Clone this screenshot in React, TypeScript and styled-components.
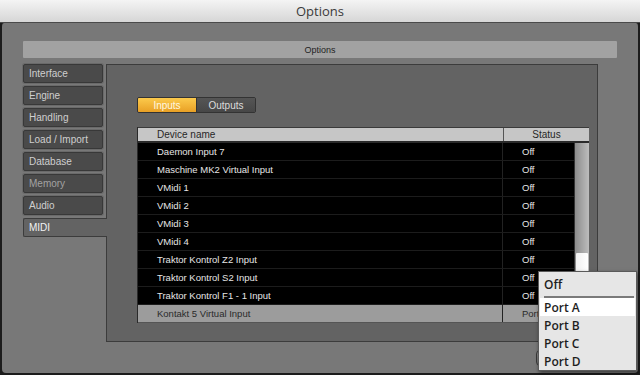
import React from "react";
import styled, { createGlobalStyle, css } from "styled-components";

const GlobalStyle = createGlobalStyle`
  html, body {
    margin: 0;
    padding: 0;
    background: #1c1c1c;
  }
  * {
    box-sizing: border-box;
  }
`;

const UI_FONT = `"Liberation Sans", Arial, sans-serif`;

// Janela
const Window = styled.div`
  position: relative;
  width: 640px;
  height: 375px;
  display: flex;
  flex-direction: column;
  background: #1c1c1c;
  font-family: ${UI_FONT};
  overflow: hidden;
`;

const TitleBar = styled.div`
  height: 23px;
  flex: none;
  display: flex;
  align-items: center;
  justify-content: center;
  background: linear-gradient(#f4f4f4, #d6d6d6);
  border-bottom: 1px solid #4a4a4a;
  color: #3a3a3a;
  font-family: "Open Sans", ${UI_FONT};
  font-size: 13px;
  padding-bottom: 1px;
`;

const Frame = styled.div`
  flex: 1;
  display: flex;
  flex-direction: column;
  background: #787878;
  border: 2px solid #1c1c1c;
  border-top: none;
  border-radius: 4px 4px 6px 6px;
  padding: 18px 21px 0 21px;
`;

const HeaderBar = styled.div`
  height: 17px;
  display: flex;
  align-items: center;
  justify-content: center;
  background: #a2a2a2;
  color: #222;
  font-size: 9px;
  border-radius: 1px;
  margin-bottom: 6px;
`;

const Body = styled.div`
  display: flex;
  height: 278px;
  padding-right: 19px;
`;

// Abas da esquerda
const Sidebar = styled.div`
  width: 83px;
  flex: none;
  display: flex;
  flex-direction: column;
  gap: 3px;
`;

const Tab = styled.div<{ $active?: boolean; $dim?: boolean }>`
  height: 19px;
  width: 80px;
  display: flex;
  align-items: center;
  padding-left: 5px;
  font-size: 10px;
  color: ${(p) => (p.$dim ? "#a2a2a2" : "#cfcfcf")};
  background: #4a4a4a;
  border: 1px solid #383838;
  border-radius: 2px;
  box-shadow: 0 0 0 1px #6a6a6a;
  ${(p) =>
    p.$active &&
    css`
      position: relative;
      z-index: 1;
      width: 84px;
      background: #636363;
      color: #f2f2f2;
      border: 1px solid #3c3c3c;
      border-right: none;
      border-radius: 2px 0 0 2px;
      box-shadow: none;
    `}
`;

const Panel = styled.div`
  flex: 1;
  display: flex;
  flex-direction: column;
  background: #636363;
  border: 1px solid #3c3c3c;
  padding: 32px 8px 0 30px;
`;

// Botões Inputs / Outputs
const Segmented = styled.div`
  display: flex;
  height: 16px;
  width: 119px;
  border: 1px solid #333;
  border-radius: 2px;
  overflow: hidden;
`;

const SegButton = styled.div<{ $on?: boolean }>`
  flex: 1;
  display: flex;
  align-items: center;
  justify-content: center;
  font-size: 10px;
  color: ${(p) => (p.$on ? "#fff8e0" : "#dcdcdc")};
  background: ${(p) =>
    p.$on ? "linear-gradient(#fcca4c, #e9a025)" : "linear-gradient(#555, #474747)"};
  & + & {
    border-left: 1px solid #333;
  }
`;

// Tabela
const Table = styled.div`
  margin-top: 14px;
  width: 452px;
  display: flex;
  flex-direction: column;
  border-left: 1px solid #2a2a2a;
`;

const HeadRow = styled.div`
  height: 16px;
  display: grid;
  grid-template-columns: 365px 1fr;
  background: #c6c6c6;
  border-top: 1px solid #3a3a3a;
  border-bottom: 2px solid #2a2a2a;
  color: #262626;
  font-size: 10px;
`;

const HeadCell = styled.div<{ $center?: boolean }>`
  display: flex;
  align-items: center;
  justify-content: ${(p) => (p.$center ? "center" : "flex-start")};
  padding-left: ${(p) => (p.$center ? "0" : "19px")};
  & + & {
    border-left: 1px solid #555;
  }
`;

const ListBody = styled.div`
  display: flex;
`;

const Rows = styled.div`
  flex: 1;
  display: flex;
  flex-direction: column;
`;

const Row = styled.div<{ $selected?: boolean }>`
  height: 18px;
  display: grid;
  grid-template-columns: 364px 1fr;
  background: ${(p) => (p.$selected ? "#9c9c9c" : "#000")};
  color: ${(p) => (p.$selected ? "#2a2a2a" : "#e6e6e6")};
  border-bottom: 1px solid ${(p) => (p.$selected ? "#555" : "#1c1c1c")};
  font-size: 9.5px;
`;

const Cell = styled.div`
  display: flex;
  align-items: center;
  padding-left: 19px;
  white-space: nowrap;
  overflow: hidden;
  & + & {
    border-left: 1px solid #222;
  }
`;

const Scrollbar = styled.div`
  width: 15px;
  flex: none;
  display: flex;
  flex-direction: column;
  background: linear-gradient(90deg, #8c8c8c, #bdbdbd);
  border-left: 1px solid #333;
`;

const Thumb = styled.div`
  height: 50px;
  margin: 0 1px;
  background: linear-gradient(90deg, #f0f0f0, #ffffff);
  border-radius: 1px;
`;

// Rodapé
const Footer = styled.div`
  display: flex;
  justify-content: flex-end;
  padding: 8px 11px 0 0;
`;

const FooterButton = styled.div`
  width: 70px;
  height: 16px;
  border: 1px solid #3a3a3a;
  border-radius: 4px;
  background: linear-gradient(#8a8a8a, #6c6c6c);
`;

// Menu suspenso
const Popup = styled.div`
  position: absolute;
  left: 538px;
  top: 271px;
  width: 99px;
  height: 100px;
  background: #e6e6e6;
  border: 1px solid #5a5a5a;
  box-shadow: 1px 2px 4px rgba(0, 0, 0, 0.5);
  padding: 3px 1px 0 1px;
  font-family: "Open Sans", ${UI_FONT};
`;

const MenuItem = styled.div<{ $hot?: boolean }>`
  height: 18px;
  display: flex;
  align-items: center;
  padding-left: 4px;
  font-size: 12px;
  font-weight: 600;
  color: #1e1e1e;
  background: ${(p) => (p.$hot ? "#ffffff" : "transparent")};
`;

const MenuSep = styled.div`
  height: 2px;
  margin: 3px 1px 0 4px;
  background: #7a7a7a;
`;

const tabs = ["Interface", "Engine", "Handling", "Load / Import", "Database", "Memory", "Audio", "MIDI"];

const devices = [
  { name: "Daemon Input 7", status: "Off" },
  { name: "Maschine MK2 Virtual Input", status: "Off" },
  { name: "VMidi 1", status: "Off" },
  { name: "VMidi 2", status: "Off" },
  { name: "VMidi 3", status: "Off" },
  { name: "VMidi 4", status: "Off" },
  { name: "Traktor Kontrol Z2 Input", status: "Off" },
  { name: "Traktor Kontrol S2 Input", status: "Off" },
  { name: "Traktor Kontrol F1 - 1 Input", status: "Off" },
  { name: "Kontakt 5 Virtual Input", status: "Port A", selected: true },
];

export default function App() {
  const thumbTop = 110;
  return (
    <Window>
      <GlobalStyle />
      <TitleBar>Options</TitleBar>
      <Frame>
        <HeaderBar>Options</HeaderBar>
        <Body>
          <Sidebar>
            {tabs.map((t) => (
              <Tab key={t} $active={t === "MIDI"} $dim={t === "Memory"}>
                {t}
              </Tab>
            ))}
          </Sidebar>
          <Panel>
            <Segmented>
              <SegButton $on>Inputs</SegButton>
              <SegButton>Outputs</SegButton>
            </Segmented>
            <Table>
              <HeadRow>
                <HeadCell>Device name</HeadCell>
                <HeadCell $center>Status</HeadCell>
              </HeadRow>
              <ListBody>
                <Rows>
                  {devices.map((d) => (
                    <Row key={d.name} $selected={d.selected}>
                      <Cell>{d.name}</Cell>
                      <Cell>{d.status}</Cell>
                    </Row>
                  ))}
                </Rows>
                <Scrollbar>
                  <Thumb style={{ marginTop: thumbTop }} />
                </Scrollbar>
              </ListBody>
            </Table>
          </Panel>
        </Body>
        <Footer>
          <FooterButton />
        </Footer>
      </Frame>
      <Popup>
        <MenuItem>Off</MenuItem>
        <MenuSep />
        <MenuItem $hot>Port A</MenuItem>
        <MenuItem>Port B</MenuItem>
        <MenuItem>Port C</MenuItem>
        <MenuItem>Port D</MenuItem>
      </Popup>
    </Window>
  );
}
